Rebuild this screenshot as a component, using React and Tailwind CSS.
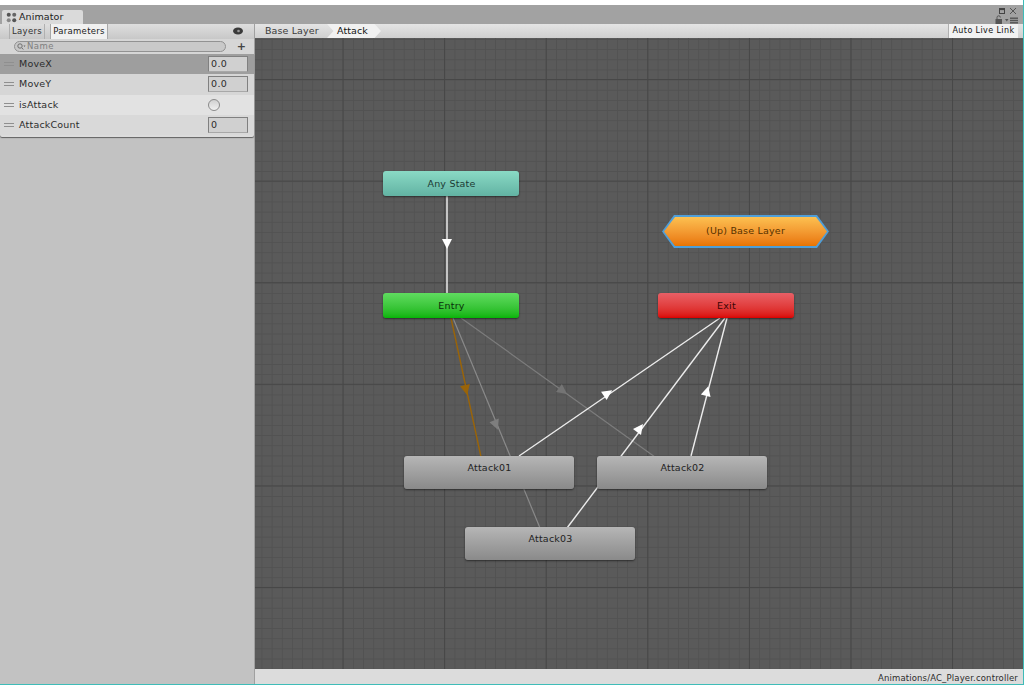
import React from 'react';

function ParamRow({ name, value, kind, rowClass }) {
  return (
    <div className={`h-[20.3px] flex items-center pl-1 pr-[6px] ${rowClass}`}>
      <div className="w-[10px] h-[4px] border-y border-[#8f8f8f] mr-[5px]" />
      <span className="flex-1 text-[#2c2c2c] tracking-[0.2px]">{name}</span>
      {kind === 'bool' ? (
        <div className="w-[12px] h-[12px] rounded-full border border-[#8a8a8a] bg-gradient-to-b from-[#d0d0d0] to-[#f0f0f0] mr-[28px]" />
      ) : (
        <div className="w-[40px] h-[16px] border border-[#808080] border-b-[#a8a8a8] bg-[#d0d0d0] pl-[2px] leading-[14px] text-[#2c2c2c] tracking-[0.4px]">{value}</div>
      )}
    </div>
  );
}

function StateNode({ label, className, textClass = 'text-[#222]' }) {
  return (
    <div className={`absolute rounded-[3px] shadow-[0_1px_2px_rgba(0,0,0,0.5)] flex justify-center ${className}`}>
      <span className={`tracking-[0.2px] translate-x-[0.5px] ${textClass}`}>{label}</span>
    </div>
  );
}

function Arrow({ x, y, angle, fill = '#fff', size = 5 }) {
  return (
    <polygon
      points={`0,${size} ${-size},${-size} ${size},${-size}`}
      transform={`translate(${x} ${y}) rotate(${angle})`}
      fill={fill}
    />
  );
}

function Edges() {
  return (
    <svg className="absolute left-0 top-0" width="769" height="631" viewBox="255 38 769 631">
      {/* grey entry lines */}
      <line x1="453" y1="318" x2="540" y2="528" stroke="#8a8a8a" strokeWidth="1.2" />
      <line x1="461" y1="318" x2="655" y2="457" stroke="#7c7c7c" strokeWidth="1.2" />
      <Arrow x={496} y={425} angle={-22} fill="#7e7e7e" />
      <Arrow x={563} y={391} angle={-54} fill="#747474" />
      {/* default transition */}
      <line x1="451" y1="318" x2="481" y2="457" stroke="#9a6408" strokeWidth="1.4" />
      <Arrow x={466} y={390} angle={-12} fill="#9a6408" />
      {/* white ones */}
      <line x1="447" y1="195" x2="447" y2="294" stroke="#f2f2f2" strokeWidth="1.4" />
      <Arrow x={447} y={244} angle={0} />
      <line x1="519" y1="456" x2="720" y2="318" stroke="#ececec" strokeWidth="1.4" />
      <Arrow x={608} y={393} angle={-124} />
      <line x1="567" y1="528" x2="725" y2="318" stroke="#ececec" strokeWidth="1.4" />
      <Arrow x={640} y={428} angle={-143} />
      <line x1="691" y1="456" x2="727" y2="318" stroke="#ececec" strokeWidth="1.4" />
      <Arrow x={707} y={391} angle={-165} />
    </svg>
  );
}

export default function App() {
  return (
    <div className="w-[1024px] h-[685px] overflow-hidden bg-white flex flex-col border-r border-[#3fbcb8] text-[9.5px] font-['DejaVu_Sans',sans-serif] text-[#222]">
      <div className="h-[5px] bg-white shrink-0" />
      {/* tab strip */}
      <div className="h-[19px] shrink-0 bg-[#a2a2a2] flex items-end relative">
        <div className="ml-[2px] w-[81px] h-[14px] bg-[#dadada] rounded-t-[2px] flex items-center pl-[4px] gap-[2px] text-[9.5px] tracking-[0.1px]">
          <svg width="11" height="11" viewBox="0 0 12 12" fill="#555">
            <circle cx="3" cy="3" r="2.2" />
            <circle cx="9" cy="3" r="2.2" fill="#666" />
            <circle cx="3" cy="9" r="2.2" fill="#888" />
            <circle cx="9" cy="9" r="2.2" />
          </svg>
          <span>Animator</span>
        </div>
        <svg className="absolute right-[17px] top-[3px]" width="7" height="6" viewBox="0 0 7 6">
          <rect x="0.5" y="0.5" width="5" height="5" fill="none" stroke="#444" />
          <rect x="0.5" y="0.5" width="5" height="1.6" fill="#444" />
        </svg>
        <svg className="absolute right-[6px] top-[2px]" width="8" height="8" viewBox="0 0 8 8" stroke="#555" strokeWidth="1">
          <path d="M1 1L7 7M7 1L1 7" />
        </svg>
        <svg className="absolute right-[20px] top-[10px]" width="8" height="9" viewBox="0 0 8 9" fill="#555">
          <rect x="0.5" y="4" width="6.5" height="5" />
          <path d="M2 4V2.5a1.7 1.7 0 0 1 3.4 0" fill="none" stroke="#555" strokeWidth="1" />
        </svg>
        <svg className="absolute right-[4px] top-[12px]" width="14" height="7" viewBox="0 0 14 7" fill="#555">
          <path d="M0 2h3.5L1.8 4.5z" />
          <rect x="5" y="0.5" width="8" height="1.4" />
          <rect x="5" y="2.8" width="8" height="1.4" />
          <rect x="5" y="5.1" width="8" height="1.4" />
        </svg>
      </div>

      <div className="flex-1 flex min-h-0">
        {/* left panel */}
        <div className="w-[255px] shrink-0 bg-[#c2c2c2] flex flex-col border-r border-[#a0a0a0]">
          <div className="h-[15px] bg-gradient-to-b from-[#dedede] to-[#c8c8c8] flex items-stretch pl-[9px] relative">
            <div className="w-[36px] border-x border-[#b0b0b0] flex items-center justify-center tracking-[0.3px] text-[8.5px] text-[#333]">Layers</div>
            <div className="ml-[5px] w-[58px] border-x border-[#a8a8a8] bg-[#f0f0f0] flex items-center justify-center tracking-[0.3px] text-[8.5px]">Parameters</div>
            <svg className="absolute right-[11px] top-[3px]" width="10" height="8" viewBox="0 0 10 8">
              <ellipse cx="5" cy="4" rx="5" ry="3.5" fill="#3a3a3a" />
              <circle cx="5.5" cy="4" r="1.3" fill="#999" />
            </svg>
          </div>
          <div className="h-[15px] bg-[#d6d6d6] flex items-center pl-[14px] pr-[8px]">
            <div className="w-[212px] h-[11px] rounded-full border border-[#929292] bg-[#c9c9c9] flex items-center pl-[2px] gap-[1px] text-[#7f7f7f] text-[8.5px] tracking-[0.5px]">
              <svg width="9" height="7" viewBox="0 0 9 7" fill="none" stroke="#666" strokeWidth="0.9">
                <circle cx="3" cy="3" r="2.2" />
                <path d="M5 5L6.3 6.5" />
                <path d="M6.5 2.5h2L7.5 4z" fill="#666" stroke="none" />
              </svg>
              <span>Name</span>
            </div>
            <span className="ml-auto text-[#444] text-[11px] leading-none font-bold">+</span>
          </div>
          <div className="bg-[#dcdcdc] shadow-[0_1px_1px_rgba(0,0,0,0.5)] pb-[2px] rounded-b-[2px]">
            <ParamRow name="MoveX" value="0.0" rowClass="bg-[#9e9e9e]" />
            <ParamRow name="MoveY" value="0.0" rowClass="bg-[#d6d6d6]" />
            <ParamRow name="isAttack" kind="bool" rowClass="bg-[#e2e2e2]" />
            <ParamRow name="AttackCount" value="0" rowClass="bg-[#d9d9d9]" />
          </div>
          <div className="flex-1" />
        </div>

        {/* graph side */}
        <div className="flex-1 flex flex-col min-w-0">
          <div className="h-[14px] shrink-0 bg-gradient-to-b from-[#e4e4e4] to-[#cfcfcf] flex items-stretch relative">
            <div className="pl-[10px] w-[72px] flex items-center tracking-[0.1px] text-[#3a3a3a]">Base Layer</div>
            <div className="w-[54px] bg-[#f1f1f1] pl-[10px] flex items-center tracking-[0.1px] text-[#111] [clip-path:polygon(0_0,88%_0,100%_50%,88%_100%,0_100%,12%_50%)]">Attack</div>
            <div className="absolute right-[5px] top-0 h-[14px] w-[70px] bg-[#f2f2f2] border-l border-[#b0b0b0] flex items-center justify-center text-[8px] tracking-[0.4px] text-[#111]">Auto Live Link</div>
          </div>
          <div className="flex-1 relative overflow-hidden bg-[#5a5a5a] bg-[linear-gradient(#474747_1px,transparent_1px),linear-gradient(90deg,#474747_1px,transparent_1px),linear-gradient(#525252_1px,transparent_1px),linear-gradient(90deg,#525252_1px,transparent_1px)] bg-[size:101.6px_101.6px,101.6px_101.6px,10.16px_10.16px,10.16px_10.16px] bg-[position:87.5px_41px,87.5px_41px,6.5px_1px,6.5px_1px]">
            <Edges />
            <StateNode label="Any State" className="left-[128px] top-[133px] w-[136px] h-[25px] pt-[1px] items-center bg-gradient-to-b from-[#8adac5] to-[#62b3a3]" textClass="text-[#1c3a34]" />
            <StateNode label="Entry" className="left-[128px] top-[255px] w-[136px] h-[25px] pt-[1px] items-center bg-gradient-to-b from-[#5fdc5f] to-[#05b505]" textClass="text-[#0a2e0a]" />
            <StateNode label="Exit" className="left-[403px] top-[255px] w-[136px] h-[25px] pt-[1px] items-center bg-gradient-to-b from-[#e85f66] to-[#da0000]" textClass="text-[#3a0606]" />
            <StateNode label="Attack01" className="left-[149px] top-[418px] w-[170px] h-[33px] pt-[5px] bg-gradient-to-b from-[#b6b6b6] to-[#8a8a8a]" />
            <StateNode label="Attack02" className="left-[342px] top-[418px] w-[170px] h-[33px] pt-[5px] bg-gradient-to-b from-[#b6b6b6] to-[#8a8a8a]" />
            <StateNode label="Attack03" className="left-[210px] top-[489px] w-[170px] h-[33px] pt-[5px] bg-gradient-to-b from-[#b6b6b6] to-[#8a8a8a]" />
            {/* up node: hexagon with blue glow */}
            <div className="absolute left-[407px] top-[177px] w-[167px] h-[33px] bg-[#4f9ed8] [clip-path:polygon(12px_0,calc(100%-12px)_0,100%_50%,calc(100%-12px)_100%,12px_100%,0_50%)]">
              <div className="absolute inset-[2px] bg-gradient-to-b from-[#fcc050] to-[#e87400] flex items-center justify-center text-[#573200] tracking-[0.2px] [clip-path:polygon(11px_0,calc(100%-11px)_0,100%_50%,calc(100%-11px)_100%,11px_100%,0_50%)]">
                (Up) Base Layer
              </div>
            </div>
          </div>
          <div className="h-[15px] shrink-0 bg-[#dcdcdc] flex items-end justify-end pr-[5px] text-[8.5px] leading-[12px] tracking-[0.15px] text-[#2c2c2c]">
            Animations/AC_Player.controller
          </div>
        </div>
      </div>
      <div className="h-[1px] shrink-0 bg-[#3fbcb8]" />
    </div>
  );
}
